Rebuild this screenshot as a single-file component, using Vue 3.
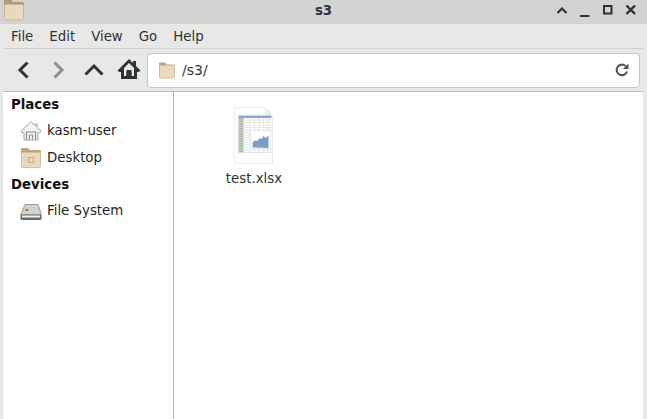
<script setup>
const menus = ['File', 'Edit', 'View', 'Go', 'Help']
</script>

<template>
  <div class="win">
    <header class="title">
      <svg class="appicon" width="24" height="24" viewBox="0 0 24 24">
        <path d="M4 0h7l2 2h9a2 2 0 0 1 2 2v4H4z" fill="#b39a78"/>
        <rect x="4.500" y="4.500" width="19" height="15.500" rx="1.500" fill="#e9d9bf" stroke="#c9b595"/>
      </svg>
      <span class="ttext">s3</span>
      <div class="wm">
        <svg width="14" height="14" viewBox="0 0 14 14"><path d="M2.500 10 7 5.500l4.500 4.500" fill="none" stroke="#2e3436" stroke-width="2.200"/></svg>
        <svg width="14" height="14" viewBox="0 0 14 14"><path d="M2 13h9.500" stroke="#2e3436" stroke-width="2"/></svg>
        <svg width="14" height="14" viewBox="0 0 14 14"><rect x="3" y="3" width="7.500" height="7.500" fill="none" stroke="#2e3436" stroke-width="2"/></svg>
        <svg width="14" height="14" viewBox="0 0 14 14"><path d="M2.500 2.500 11 11M11 2.500 2.500 11" stroke="#2e3436" stroke-width="2.400"/></svg>
      </div>
    </header>
    <nav class="menu">
      <span v-for="m in menus" :key="m">{{ m }}</span>
    </nav>
    <div class="frame">
      <div class="toolbar">
        <div class="navs">
          <svg width="24" height="24" viewBox="0 0 24 24"><path d="M14.500 4.500 7 12l7.500 7.500" fill="none" stroke="#2e3436" stroke-width="3"/></svg>
          <svg width="24" height="24" viewBox="0 0 24 24"><path d="M8.500 4.500 16 12l-7.500 7.500" fill="none" stroke="#8c8e8e" stroke-width="3"/></svg>
          <svg class="up" width="24" height="24" viewBox="0 0 24 24"><path d="M3.500 16.500 12 8l8.500 8.500" fill="none" stroke="#2e3436" stroke-width="3"/></svg>
          <svg class="home" width="24" height="24" viewBox="0 0 24 24"><path fill-rule="evenodd" d="M12 1 .5 12.500l1.800 1.500H4v7h16v-7h1.700l1.800-1.500L19 8V3h-3v2zM12 5l5 5v8h-2.500v-6h-5v6H7v-8z" fill="#2e3436"/><rect x="9.500" y="14" width="5" height="5" fill="#2e3436"/></svg>
        </div>
        <div class="loc">
          <svg width="18" height="18" viewBox="0 0 18 18">
            <path d="M2 1.500h5l2 2h6.500a1.500 1.500 0 0 1 1.500 1.500v3H1V2.500a1 1 0 0 1 1-1z" fill="#bda685"/>
            <rect x="1.500" y="4.500" width="15" height="12.500" rx="1" fill="#e9d9bf" stroke="#d2bfa0"/>
          </svg>
          <span class="path">/s3/</span>
          <svg class="reload" width="16" height="16" viewBox="0 0 16 16">
            <path d="M13 9.500A5.300 5.300 0 1 1 11.500 4" fill="none" stroke="#4a4f51" stroke-width="2"/>
            <path d="M9 7h5.500V1.500z" fill="#4a4f51"/>
          </svg>
        </div>
      </div>
      <div class="body">
        <aside class="side">
          <h2>Places</h2>
          <div class="item">
            <svg width="22" height="22" viewBox="0 0 22 22">
              <path d="M11 1.500 .8 11.500l1.700 1H4V20h14v-7.500h1.500l1.700-1L17 7.500V4h-2v1.500z" fill="#f3f3f1" stroke="#a2a4a1"/>
              <path d="M6.500 19.500V12h9v7.500" fill="none" stroke="#8a8c8a" stroke-width="1.200"/>
              <path d="M9.500 19.500V15h3v4.500" fill="none" stroke="#8a8c8a"/>
            </svg>
            <span>kasm-user</span>
          </div>
          <div class="item">
            <svg width="22" height="22" viewBox="0 0 22 22">
              <path d="M2 1h6l2 2h10a1 1 0 0 1 1 1v5H1V2a1 1 0 0 1 1-1z" fill="#bda685"/>
              <rect x="1.500" y="5.500" width="19" height="15" rx="1" fill="#e9d9bf" stroke="#d2bfa0"/>
              <rect x="8.500" y="10.500" width="5" height="5" fill="none" stroke="#c4ae8e"/>
              <path d="M5.500 9v8M16.500 9v8" stroke="#dac8aa" stroke-dasharray="2 2"/>
            </svg>
            <span>Desktop</span>
          </div>
          <h2>Devices</h2>
          <div class="item">
            <svg width="22" height="22" viewBox="0 0 22 22">
              <path d="M5 4.500h13L21.500 15H.5z" fill="#d2d3d0" stroke="#9a9c99"/>
              <rect x="0.500" y="14.500" width="21" height="5.500" rx="1.500" fill="#6a6d6c"/>
              <rect x="2" y="15.500" width="18" height="2" fill="#efefed"/>
              <rect x="5" y="9" width="3.500" height="2" fill="#d9732e"/>
            </svg>
            <span>File System</span>
          </div>
        </aside>
        <main class="files">
          <div class="file">
            <svg width="48" height="60" viewBox="0 0 48 60">
              <path d="M4.500 2.500H35.500L42.500 10.500V58.500H4.500z" fill="#fefefe" stroke="#ededed"/>
              <path d="M35.500 2.500V10.500h7z" fill="#efefef"/>
              <rect x="8.500" y="10.500" width="33" height="2.500" fill="#8aa9d0"/>
              <rect x="8.500" y="13" width="5" height="35" fill="#b0b2a8"/>
              <g stroke="#dfe2e3" stroke-width=".8">
                <path d="M8.500 15h33M8.500 17.500h33M8.500 20h33M8.500 22.500h33M8.500 25h33M8.500 27.500h12M8.500 30h12M8.500 32.500h12M8.500 35h12M8.500 37.500h12M8.500 40h12M8.500 42.500h12M8.500 45h33M8.500 47.500h33"/>
                <path d="M16 13v35M20 13v35M24.500 13v12M29 13v12M33.500 13v12M38 13v12M24.500 44v4M29 44v4M33.500 44v4M38 44v4"/>
              </g>
              <rect x="20.500" y="25.500" width="20" height="18" fill="#fff" stroke="#e6e9ec"/>
              <path d="M22.500 42.500v-5.500l3-1.500 2 .5 2-3 2 1 2-3 2 2 3-2.500v12.500z" fill="#7d9cc6"/>
            </svg>
            <span>test.xlsx</span>
          </div>
        </main>
      </div>
    </div>
  </div>
</template>

<style>
html, body { margin: 0; }
</style>

<style scoped>
.win {
  width: 647px;
  height: 419px;
  overflow: hidden;
  display: flex;
  flex-direction: column;
  background: #e8e8e7;
  color: #2e3436;
  font-family: "DejaVu Sans", sans-serif;
  font-size: 13.33px;
}
.title {
  position: relative;
  height: 24px;
  flex: none;
  background: #d3d3d1;
  display: flex;
  align-items: center;
  justify-content: center;
}
.appicon { position: absolute; left: 0; top: 0; }
.ttext { font-weight: 700; font-size: 13.33px; margin-top: -3px; }
.wm {
  position: absolute;
  right: 9px;
  top: 3px;
  display: flex;
  gap: 9px;
}
.menu {
  height: 24px;
  flex: none;
  display: flex;
  align-items: center;
  gap: 16px;
  padding-left: 11px;
}
.frame {
  flex: 1;
  margin: 0 4px 0 3px;
  display: flex;
  flex-direction: column;
  min-height: 0;
}
.toolbar {
  height: 44px;
  flex: none;
  border-top: 1px solid #cfcfcd;
  border-bottom: 1px solid #bdbdbb;
  box-sizing: border-box;
  display: flex;
  align-items: center;
  padding-left: 10px;
}
.navs { display: flex; gap: 9px; }
.up { margin-left: 3px; }
.home { margin-left: 2px; }
.loc {
  flex: 1;
  height: 35px;
  margin-left: 6px;
  margin-right: 3px;
  box-sizing: border-box;
  background: #fff;
  border: 1px solid #c6c6c4;
  border-radius: 4px;
  display: flex;
  align-items: center;
  padding: 0 9px 0 10px;
  gap: 6px;
}
.path { flex: 1; font-size: 14px; }
.reload { flex: none; }
.body {
  flex: 1;
  display: flex;
  min-height: 0;
  background: #fff;
}
.side {
  flex: none;
  width: 162px;
  border-right: 1px solid #b5b5b3;
  padding-left: 8px;
}
.side h2 {
  margin: 0;
  font-size: 13.33px;
  font-weight: 700;
  height: 25px;
  line-height: 25px;
  color: #111;
}
.item {
  display: flex;
  align-items: center;
  height: 27px;
  gap: 5px;
  padding-left: 9px;
  color: #1c1f20;
}
.side .item + h2 { height: 26px; line-height: 27px; }
.files { flex: 1; padding: 13px 0 0 43px; }
.file {
  width: 74px;
  display: flex;
  flex-direction: column;
  align-items: center;
  gap: 6px;
}
</style>
